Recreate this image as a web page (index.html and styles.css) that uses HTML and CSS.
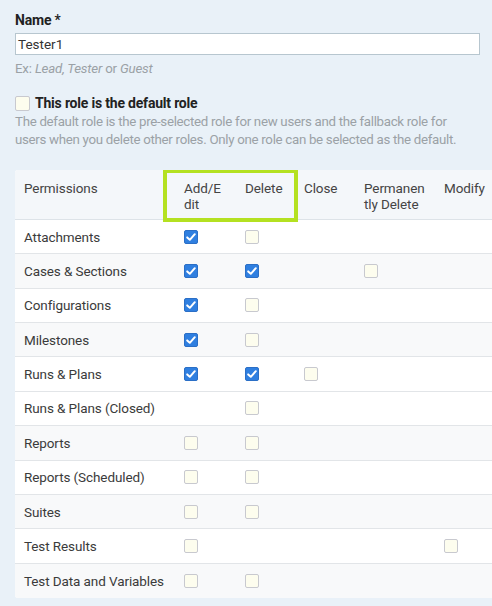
FILE: index.html
```html
<!DOCTYPE html>
<html>
<head>
<meta charset="utf-8">
<link rel="stylesheet" href="styles.css">
</head>
<body>
<div class="page">
  <div class="field-label">Name <span class="req">*</span></div>
  <div class="input">Tester1</div>
  <div class="hint">Ex: <i>Lead, Tester</i> or <i>Guest</i></div>
  <div class="default-row">
    <span class="cb"></span>
    <span class="default-label">This role is the default role</span>
  </div>
  <p class="desc">The default role is the pre-selected role for new users and the fallback role for<br>users when you delete other roles. Only one role can be selected as the default.</p>

  <div class="table-wrap">
    <div class="row head">
      <div class="cell">Permissions</div>
      <div class="cell">Add/E<br>dit</div>
      <div class="cell">Delete</div>
      <div class="cell">Close</div>
      <div class="cell">Permanen<br>tly Delete</div>
      <div class="cell">Modify</div>
    </div>
    <div class="row">
      <div class="cell">Attachments</div>
      <div class="cell"><span class="cb on"></span></div>
      <div class="cell"><span class="cb"></span></div>
      <div class="cell"></div><div class="cell"></div><div class="cell"></div>
    </div>
    <div class="row alt">
      <div class="cell">Cases &amp; Sections</div>
      <div class="cell"><span class="cb on"></span></div>
      <div class="cell"><span class="cb on"></span></div>
      <div class="cell"></div>
      <div class="cell"><span class="cb"></span></div>
      <div class="cell"></div>
    </div>
    <div class="row">
      <div class="cell">Configurations</div>
      <div class="cell"><span class="cb on"></span></div>
      <div class="cell"><span class="cb"></span></div>
      <div class="cell"></div><div class="cell"></div><div class="cell"></div>
    </div>
    <div class="row alt">
      <div class="cell">Milestones</div>
      <div class="cell"><span class="cb on"></span></div>
      <div class="cell"><span class="cb"></span></div>
      <div class="cell"></div><div class="cell"></div><div class="cell"></div>
    </div>
    <div class="row">
      <div class="cell">Runs &amp; Plans</div>
      <div class="cell"><span class="cb on"></span></div>
      <div class="cell"><span class="cb on"></span></div>
      <div class="cell"><span class="cb"></span></div>
      <div class="cell"></div><div class="cell"></div>
    </div>
    <div class="row">
      <div class="cell">Runs &amp; Plans (Closed)</div>
      <div class="cell"></div>
      <div class="cell"><span class="cb"></span></div>
      <div class="cell"></div><div class="cell"></div><div class="cell"></div>
    </div>
    <div class="row alt">
      <div class="cell">Reports</div>
      <div class="cell"><span class="cb"></span></div>
      <div class="cell"><span class="cb"></span></div>
      <div class="cell"></div><div class="cell"></div><div class="cell"></div>
    </div>
    <div class="row">
      <div class="cell">Reports (Scheduled)</div>
      <div class="cell"><span class="cb"></span></div>
      <div class="cell"><span class="cb"></span></div>
      <div class="cell"></div><div class="cell"></div><div class="cell"></div>
    </div>
    <div class="row alt">
      <div class="cell">Suites</div>
      <div class="cell"><span class="cb"></span></div>
      <div class="cell"><span class="cb"></span></div>
      <div class="cell"></div><div class="cell"></div><div class="cell"></div>
    </div>
    <div class="row">
      <div class="cell">Test Results</div>
      <div class="cell"><span class="cb"></span></div>
      <div class="cell"></div>
      <div class="cell"></div><div class="cell"></div>
      <div class="cell"><span class="cb"></span></div>
    </div>
    <div class="row alt last">
      <div class="cell">Test Data and Variables</div>
      <div class="cell"><span class="cb"></span></div>
      <div class="cell"><span class="cb"></span></div>
      <div class="cell"></div><div class="cell"></div><div class="cell"></div>
    </div>
    <div class="highlight"></div>
  </div>
</div>
</body>
</html>
```

FILE: styles.css
```css
html, body {
  margin: 0;
  padding: 0;
  background: #e9f1f8;
  overflow: hidden;
}
body {
  font-family: Roboto, "Liberation Sans", sans-serif;
  color: #3a3a3a;
}
.page {
  padding: 11px 0 0 15px;
}
.field-label {
  font-size: 14px;
  line-height: 18px;
  font-weight: 700;
  color: #222;
  letter-spacing: -0.2px;
}
.req { font-weight: 500; }
.input {
  margin-top: 4px;
  width: 465px;
  height: 22px;
  box-sizing: border-box;
  background: #fff;
  border: 1px solid #b7c6cf;
  font-size: 13.5px;
  line-height: 20px;
  padding-left: 2px;
  color: #333;
}
.hint {
  margin-top: 6px;
  font-size: 13.3px;
  line-height: 16px;
  color: #9ba1a6;
  letter-spacing: -0.2px;
}
.default-row {
  margin-top: 17px;
  display: flex;
  align-items: center;
  gap: 5px;
  height: 18px;
}
.default-label {
  font-size: 14px;
  font-weight: 700;
  color: #222;
  letter-spacing: -0.2px;
}
.desc {
  margin: 1px 0 0;
  font-size: 13.3px;
  line-height: 18px;
  color: #9ba1a6;
  letter-spacing: -0.3px;
}
.cb {
  display: inline-block;
  width: 14px;
  height: 14px;
  box-sizing: border-box;
  border: 1px solid #c8c9cf;
  border-radius: 2px;
  background: #fdfdee;
  vertical-align: middle;
}
.default-row .cb { width: 15px; height: 15px; }
.cb.on {
  background: #2f7fe0 url("data:image/svg+xml;utf8,<svg xmlns='http://www.w3.org/2000/svg' viewBox='0 0 14 14'><path d='M3.2 7.4 L5.8 9.8 L10.8 4.2' fill='none' stroke='white' stroke-width='2' stroke-linecap='round' stroke-linejoin='round'/></svg>") center/14px 14px no-repeat;
  border-color: #2b6fc6;
}
.table-wrap {
  position: relative;
  margin-top: 21px;
  width: 477px;
  overflow: hidden;
  background: #fff;
  border-radius: 3px 0 0 3px;
}
.row {
  display: grid;
  grid-template-columns: 160px 61px 59px 60px 80px 80px;
  height: 34.36px;
  box-sizing: border-box;
  border-bottom: 1px solid #e2e5e8;
  font-size: 13.5px;
  letter-spacing: -0.1px;
  color: #3b3b3b;
}
.row.alt { background: #f8f9fa; }
.row.last { border-bottom: none; }
.row .cell {
  padding-left: 9px;
  display: flex;
  align-items: center;
  white-space: nowrap;
}
.row.head {
  height: 50px;
  background: #f4f7fa;
  border-bottom: 1px solid #dde3e8;
}
.row.head .cell {
  align-items: flex-start;
  padding-top: 10px;
  line-height: 16px;
  color: #444;
}
.highlight {
  position: absolute;
  left: 148px;
  top: -1px;
  width: 135px;
  height: 53px;
  box-sizing: border-box;
  border: 4px solid #b4e121;
  pointer-events: none;
}
```
